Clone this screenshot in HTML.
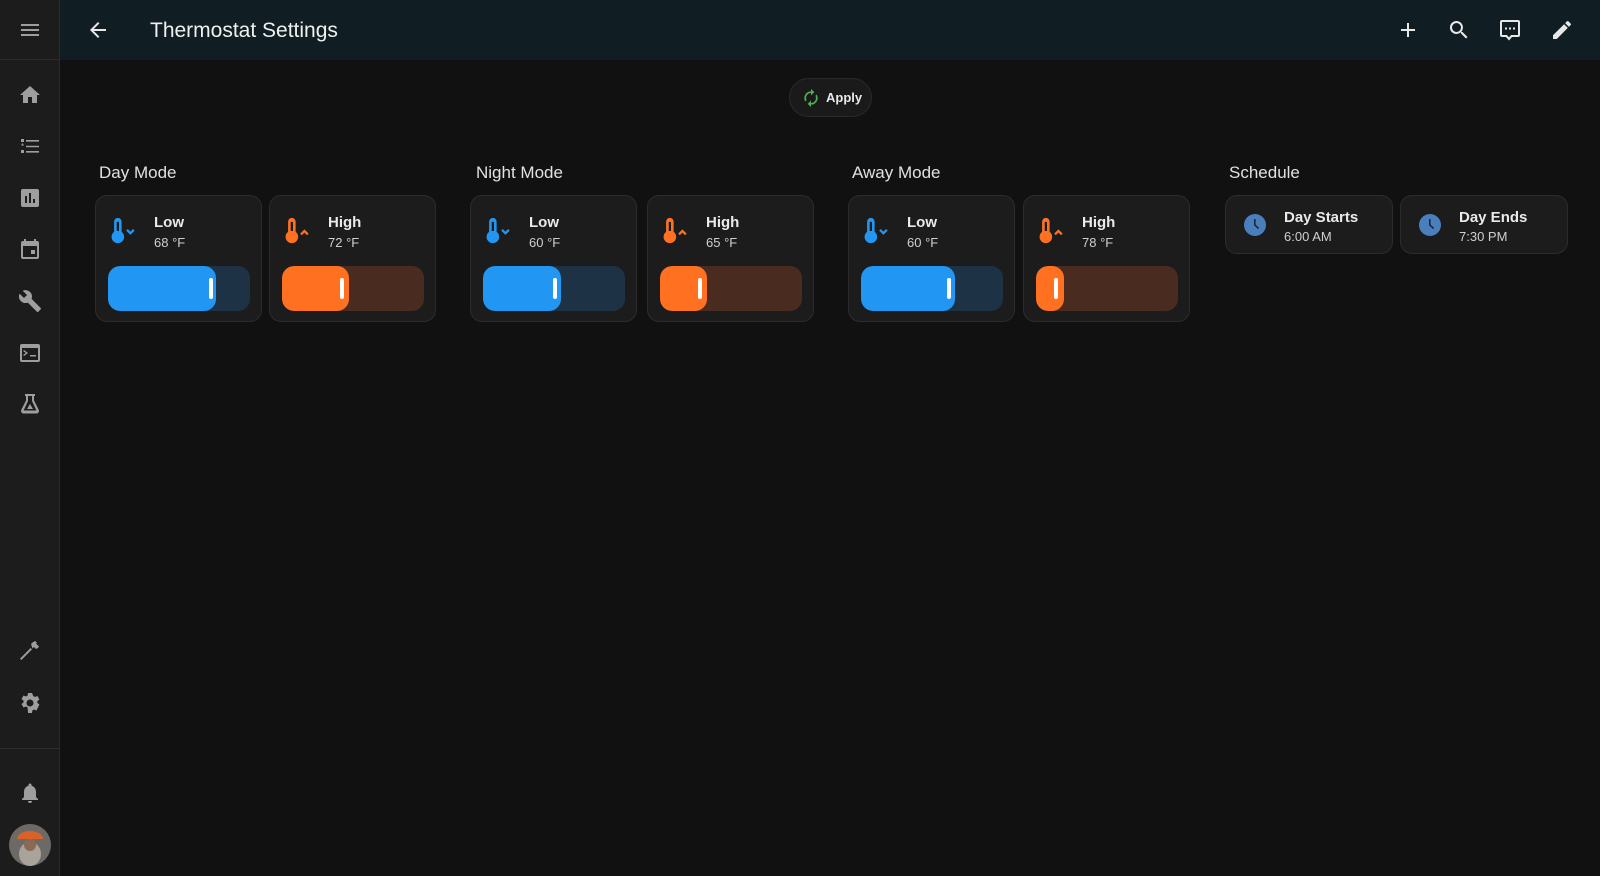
<!DOCTYPE html>
<html><head><meta charset="utf-8">
<style>
*{box-sizing:border-box;margin:0;padding:0}
body{width:1600px;height:876px;background:#111111;font-family:"Liberation Sans",Roboto,sans-serif;color:#e1e1e1;position:relative;overflow:hidden}
.side{position:absolute;left:0;top:0;width:60px;height:876px;background:#1c1c1c;border-right:1px solid #2a2a2a}
.side .top{height:60px;border-bottom:1px solid #2a2a2a}
.ico{position:absolute;left:18px;width:24px;height:24px;fill:#9e9e9e}
.hdr{position:absolute;left:60px;top:0;right:0;height:60px;background:#101e24}
.hdr .t{position:absolute;left:90px;top:19px;font-size:21px;color:#f0f0f0}
.hi{position:absolute;top:18px;width:24px;height:24px;fill:#e8e8e8}
.apply{position:absolute;left:789px;top:78px;width:83px;height:39px;border-radius:20px;background:#1a1a1a;border:1px solid #2a2a2a}
.apply span{position:absolute;left:36px;top:11px;font-size:13px;font-weight:bold;color:#e8e8e8}
.st{position:absolute;top:163px;font-size:17px;color:#e1e1e1}
.card{position:absolute;top:195px;width:167px;height:127px;background:#1c1c1c;border:1px solid #2c2c2c;border-radius:12px}
.card .n{position:absolute;left:58px;top:18px;font-size:15px;font-weight:bold;color:#eaeaea}
.card .v{position:absolute;left:58px;top:39px;font-size:13px;color:#cfcfcf}
.card svg.th{position:absolute;left:15px;top:20px;width:32px;height:30px}
.sl{position:absolute;left:12px;top:70px;width:142px;height:45px;border-radius:12px;overflow:hidden}
.sl .f{position:absolute;left:0;top:0;bottom:0;border-radius:12px}
.sl .k{position:absolute;top:12px;width:4px;height:21px;border-radius:2px;background:#fff}
.b .sl{background:#1e3246}.b .f{background:#2196f3}
.o .sl{background:#4a2b20}.o .f{background:#ff7121}
.sc{position:absolute;top:195px;width:168px;height:59px;background:#1c1c1c;border:1px solid #2c2c2c;border-radius:12px}
.sc .n{position:absolute;left:58px;top:13px;font-size:15px;font-weight:bold;color:#eaeaea}
.sc .v{position:absolute;left:58px;top:33px;font-size:13px;color:#cfcfcf}
.sc svg{position:absolute;left:17px;top:17px;width:24px;height:24px}
</style></head><body>
<div class="side"><div class="top"></div>
<svg class="ico" style="top:18px" viewBox="0 0 24 24"><path d="M3 6h18v2H3zm0 5h18v2H3zm0 5h18v2H3z"/></svg>
<svg class="ico" style="top:83px" viewBox="0 0 24 24"><path d="M10 20v-6h4v6h5v-8h3L12 3 2 12h3v8z"/></svg>
<svg class="ico" style="top:135px" viewBox="0 0 24 24"><path d="M3 4h3v3H3zm5 1h13v1.6H8zM3 10.5l1.5-2.5 1.5 2.5zm5 .2h13v1.6H8zM3 15h3v3H3zm5 1h13v1.6H8z"/></svg>
<svg class="ico" style="top:186px" viewBox="0 0 24 24"><path d="M19 3H5a2 2 0 0 0-2 2v14a2 2 0 0 0 2 2h14a2 2 0 0 0 2-2V5a2 2 0 0 0-2-2zM9 17H7v-7h2zm4 0h-2V7h2zm4 0h-2v-4h2z"/></svg>
<svg class="ico" style="top:237px" viewBox="0 0 24 24"><path d="M19 4h-1V2h-2v2H8V2H6v2H5a2 2 0 0 0-2 2v14a2 2 0 0 0 2 2h14a2 2 0 0 0 2-2V6a2 2 0 0 0-2-2zm0 16H5V9h14zm-6-7h4v4h-4z"/></svg>
<svg class="ico" style="top:289px" viewBox="0 0 24 24"><path d="M22.7 19l-9.1-9.1c.9-2.3.4-5-1.5-6.9-2-2-5-2.4-7.4-1.3L9 6 6 9 1.6 4.7C.4 7.1.9 10.1 2.9 12.1c1.9 1.9 4.6 2.4 6.9 1.5l9.1 9.1c.4.4 1 .4 1.4 0l2.3-2.3c.5-.4.5-1.1.1-1.4z"/></svg>
<svg class="ico" style="top:341px" viewBox="0 0 24 24"><path d="M20 3H4a2 2 0 0 0-2 2v14a2 2 0 0 0 2 2h16a2 2 0 0 0 2-2V5a2 2 0 0 0-2-2zm0 16H4V7h16zM6 9l4 3-4 3-.9-1 2.7-2-2.7-2zm6 5h6v1.5h-6z"/></svg>
<svg class="ico" style="top:392px" viewBox="0 0 24 24"><path d="M7 2v2h1v4.5L3.2 18A2.5 2.5 0 0 0 5.5 21.5h13a2.5 2.5 0 0 0 2.3-3.5L16 8.5V4h1V2zm3 2h4v5l4.4 9.5H5.6L10 9z"/><path d="M12 12l3 5H9z"/></svg>
<svg class="ico" style="top:639px" viewBox="0 0 24 24"><path d="M2 19.6l1.4 1.4L14 10.4 12.6 9zM13 5l1.5-1.5L17 2l2 1.5-1 1 3 3-1 1.5-2 1-2-2-1.5 1.5z"/></svg>
<svg class="ico" style="top:691px" viewBox="0 0 24 24"><path fill-rule="evenodd" d="M12 8.5a3.5 3.5 0 1 0 0 7 3.5 3.5 0 0 0 0-7zm9.4 5l-2.1-1.6c0-.3.1-.6.1-.9s0-.6-.1-.9l2.1-1.6-2-3.5-2.5 1a7 7 0 0 0-1.6-.9L14 2h-4l-.4 2.6c-.6.2-1.1.5-1.6.9l-2.5-1-2 3.5 2.1 1.6c0 .3-.1.6-.1.9s0 .6.1.9l-2.1 1.6 2 3.5 2.5-1c.5.4 1 .7 1.6.9L10 22h4l.4-2.6c.6-.2 1.1-.5 1.6-.9l2.5 1z"/></svg>
<div style="position:absolute;left:0;top:748px;width:60px;border-top:1px solid #2e2e2e"></div>
<svg class="ico" style="top:781px" viewBox="0 0 24 24"><path d="M12 22a2 2 0 0 0 2-2h-4a2 2 0 0 0 2 2zm6-6v-5c0-3.1-1.6-5.6-4.5-6.3V4a1.5 1.5 0 0 0-3 0v.7C7.6 5.4 6 7.9 6 11v5l-2 2v1h16v-1z"/></svg>
<svg style="position:absolute;left:9px;top:824px;width:42px;height:42px" viewBox="0 0 42 42"><circle cx="21" cy="21" r="21" fill="#6d6a66"/><path d="M8 15a13 8 0 0 1 26 0z" fill="#d8622a"/><ellipse cx="21" cy="30" rx="11" ry="12" fill="#a9a39b"/><circle cx="21" cy="21" r="6" fill="#8a6a55"/></svg>
</div>
<div class="hdr">
<svg class="hi" style="left:26px" viewBox="0 0 24 24"><path d="M20 11H7.8l5.6-5.6L12 4l-8 8 8 8 1.4-1.4L7.8 13H20z"/></svg>
<div class="t">Thermostat Settings</div>
<svg class="hi" style="left:1336px" viewBox="0 0 24 24"><path d="M19 13h-6v6h-2v-6H5v-2h6V5h2v6h6z"/></svg>
<svg class="hi" style="left:1387px" viewBox="0 0 24 24"><path d="M15.5 14h-.8l-.3-.3A6.5 6.5 0 1 0 9.5 16a6.5 6.5 0 0 0 4.2-1.6l.3.3v.8l5 5 1.5-1.5zm-6 0a4.5 4.5 0 1 1 0-9 4.5 4.5 0 0 1 0 9z"/></svg>
<svg class="hi" style="left:1438px" viewBox="0 0 24 24"><path d="M20 2H4a2 2 0 0 0-2 2v13a2 2 0 0 0 2 2h4l3 3.5 3-3.5h6a2 2 0 0 0 2-2V4a2 2 0 0 0-2-2zm0 15h-6.9L11 19.4 8.9 17H4V4h16zM7 9.5h2v2H7zm4 0h2v2h-2zm4 0h2v2h-2z"/></svg>
<svg class="hi" style="left:1490px" viewBox="0 0 24 24"><path d="M3 17.3V21h3.8L17.8 9.9 14.1 6.2zM20.7 7a1 1 0 0 0 0-1.4l-2.3-2.3a1 1 0 0 0-1.4 0l-1.8 1.8 3.7 3.8z"/></svg>
</div>
<div class="apply"><svg style="position:absolute;left:11px;top:9px;width:20px;height:20px" viewBox="0 0 24 24" fill="#4caf50"><path d="M12 6v3l4-4-4-4v3a8 8 0 0 0-6.8 12.2l1.5-1.5A6 6 0 0 1 12 6zm6.8 1.8l-1.5 1.5A6 6 0 0 1 12 18v-3l-4 4 4 4v-3a8 8 0 0 0 6.8-12.2z"/></svg><span>Apply</span></div>

<div class="st" style="left:99px">Day Mode</div>
<div class="st" style="left:476px">Night Mode</div>
<div class="st" style="left:852px">Away Mode</div>
<div class="st" style="left:1229px">Schedule</div>

<div class="card b" style="left:95px"><svg class="th" viewBox="0 0 28 26"><path fill="#2196f3" d="M6 1.5a3.3 3.3 0 0 1 3.3 3.3v9a5.5 5.5 0 1 1-6.6 0v-9A3.3 3.3 0 0 1 6 1.5z"/><rect x="5" y="5" width="2" height="8" fill="#1c1c1c"/><path d="M14 12l3 3 3-3" stroke="#2196f3" stroke-width="2" fill="none"/></svg><div class="n">Low</div><div class="v">68 °F</div><div class="sl"><div class="f" style="width:76%"></div><div class="k" style="left:101px"></div></div></div>
<div class="card o" style="left:269px"><svg class="th" viewBox="0 0 28 26"><path fill="#ff7121" d="M6 1.5a3.3 3.3 0 0 1 3.3 3.3v9a5.5 5.5 0 1 1-6.6 0v-9A3.3 3.3 0 0 1 6 1.5z"/><rect x="5" y="5" width="2" height="8" fill="#1c1c1c"/><path d="M14 16l3-3 3 3" stroke="#ff7121" stroke-width="2" fill="none"/></svg><div class="n">High</div><div class="v">72 °F</div><div class="sl"><div class="f" style="width:47%"></div><div class="k" style="left:58px"></div></div></div>
<div class="card b" style="left:470px"><svg class="th" viewBox="0 0 28 26"><path fill="#2196f3" d="M6 1.5a3.3 3.3 0 0 1 3.3 3.3v9a5.5 5.5 0 1 1-6.6 0v-9A3.3 3.3 0 0 1 6 1.5z"/><rect x="5" y="5" width="2" height="8" fill="#1c1c1c"/><path d="M14 12l3 3 3-3" stroke="#2196f3" stroke-width="2" fill="none"/></svg><div class="n">Low</div><div class="v">60 °F</div><div class="sl"><div class="f" style="width:55%"></div><div class="k" style="left:70px"></div></div></div>
<div class="card o" style="left:647px"><svg class="th" viewBox="0 0 28 26"><path fill="#ff7121" d="M6 1.5a3.3 3.3 0 0 1 3.3 3.3v9a5.5 5.5 0 1 1-6.6 0v-9A3.3 3.3 0 0 1 6 1.5z"/><rect x="5" y="5" width="2" height="8" fill="#1c1c1c"/><path d="M14 16l3-3 3 3" stroke="#ff7121" stroke-width="2" fill="none"/></svg><div class="n">High</div><div class="v">65 °F</div><div class="sl"><div class="f" style="width:33%"></div><div class="k" style="left:38px"></div></div></div>
<div class="card b" style="left:848px"><svg class="th" viewBox="0 0 28 26"><path fill="#2196f3" d="M6 1.5a3.3 3.3 0 0 1 3.3 3.3v9a5.5 5.5 0 1 1-6.6 0v-9A3.3 3.3 0 0 1 6 1.5z"/><rect x="5" y="5" width="2" height="8" fill="#1c1c1c"/><path d="M14 12l3 3 3-3" stroke="#2196f3" stroke-width="2" fill="none"/></svg><div class="n">Low</div><div class="v">60 °F</div><div class="sl"><div class="f" style="width:66%"></div><div class="k" style="left:86px"></div></div></div>
<div class="card o" style="left:1023px"><svg class="th" viewBox="0 0 28 26"><path fill="#ff7121" d="M6 1.5a3.3 3.3 0 0 1 3.3 3.3v9a5.5 5.5 0 1 1-6.6 0v-9A3.3 3.3 0 0 1 6 1.5z"/><rect x="5" y="5" width="2" height="8" fill="#1c1c1c"/><path d="M14 16l3-3 3 3" stroke="#ff7121" stroke-width="2" fill="none"/></svg><div class="n">High</div><div class="v">78 °F</div><div class="sl"><div class="f" style="width:20%"></div><div class="k" style="left:18px"></div></div></div>

<div class="sc" style="left:1225px"><svg viewBox="0 0 24 24"><circle cx="12" cy="12" r="11" fill="#4a7fbd"/><path d="M11 6h1.6v5.6l3.6 3.4-1.1 1.1L11 12.3z" fill="#1c2636"/></svg><div class="n">Day Starts</div><div class="v">6:00 AM</div></div>
<div class="sc" style="left:1400px"><svg viewBox="0 0 24 24"><circle cx="12" cy="12" r="11" fill="#4a7fbd"/><path d="M11 6h1.6v5.6l3.6 3.4-1.1 1.1L11 12.3z" fill="#1c2636"/></svg><div class="n">Day Ends</div><div class="v">7:30 PM</div></div>
</body></html>
